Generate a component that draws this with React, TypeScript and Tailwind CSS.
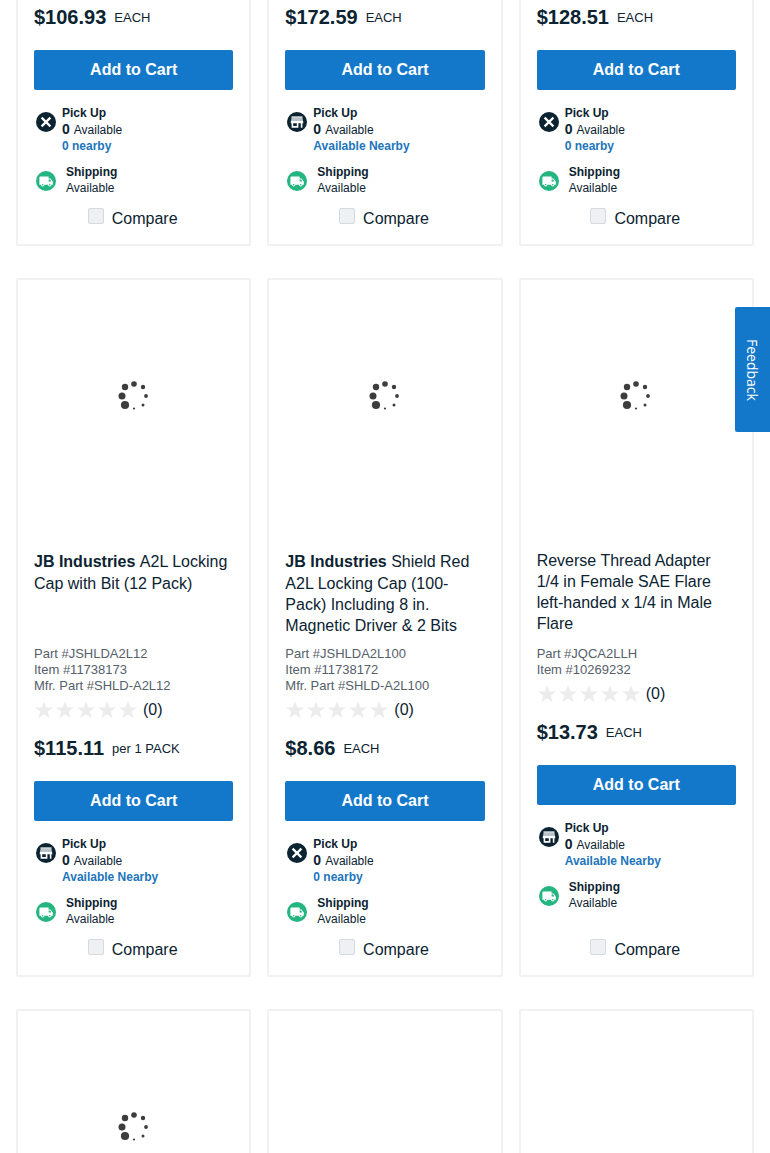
import type { ReactNode } from 'react'

type Product = {
  id: string
  brand?: string
  name?: string
  parts?: string[]
  price: string
  unit: string
  nearby: string
  inStoreNearby: boolean
}

const topProducts: Product[] = [
  { id: 'a1', price: '$106.93', unit: 'EACH', nearby: '0 nearby', inStoreNearby: false },
  { id: 'a2', price: '$172.59', unit: 'EACH', nearby: 'Available Nearby', inStoreNearby: true },
  { id: 'a3', price: '$128.51', unit: 'EACH', nearby: '0 nearby', inStoreNearby: false },
]

const products: Product[] = [
  {
    id: 'b1',
    brand: 'JB Industries',
    name: 'A2L Locking Cap with Bit (12 Pack)',
    parts: ['Part #JSHLDA2L12', 'Item #11738173', 'Mfr. Part #SHLD-A2L12'],
    price: '$115.11',
    unit: 'per 1 PACK',
    nearby: 'Available Nearby',
    inStoreNearby: true,
  },
  {
    id: 'b2',
    brand: 'JB Industries',
    name: 'Shield Red A2L Locking Cap (100-Pack) Including 8 in. Magnetic Driver & 2 Bits',
    parts: ['Part #JSHLDA2L100', 'Item #11738172', 'Mfr. Part #SHLD-A2L100'],
    price: '$8.66',
    unit: 'EACH',
    nearby: '0 nearby',
    inStoreNearby: false,
  },
  {
    id: 'b3',
    name: 'Reverse Thread Adapter 1/4 in Female SAE Flare left-handed x 1/4 in Male Flare',
    parts: ['Part #JQCA2LLH', 'Item #10269232'],
    price: '$13.73',
    unit: 'EACH',
    nearby: 'Available Nearby',
    inStoreNearby: true,
  },
]

function Spinner() {
  return (
    <svg className="size-8" viewBox="0 0 32 32" fill="#3d3d3d" role="img" aria-label="Loading">
      <circle cx="17" cy="4" r="2.8" />
      <circle cx="26" cy="7" r="2.2" />
      <circle cx="29" cy="16" r="1.9" />
      <circle cx="26" cy="25" r="1.5" />
      <circle cx="17" cy="28.5" r="1.1" />
      <circle cx="8" cy="25" r="4.1" />
      <circle cx="5" cy="16" r="3.5" />
      <circle cx="8" cy="7" r="3.2" />
    </svg>
  )
}

function UnavailableIcon() {
  return (
    <svg className="size-5 shrink-0" viewBox="0 0 20 20" aria-hidden="true">
      <circle cx="10" cy="10" r="10" fill="#0c2331" />
      <path d="M5.6 5.6l8.8 8.8M14.4 5.6l-8.8 8.8" stroke="#fff" strokeWidth="2.2" />
    </svg>
  )
}

function StoreIcon() {
  return (
    <svg className="size-5 shrink-0" viewBox="0 0 20 20" aria-hidden="true">
      <circle cx="10" cy="10" r="10" fill="#0c2331" />
      <path d="M4.5 4.4h11v1.4h-11z" fill="#fff" />
      <path d="M4.5 6h11l.6 2.9H3.9z" fill="#b9c3ca" />
      <path
        d="M3.9 8.9h12.2l.2 2.4h-.9v4.4h-1.6v-4.4h-2.4v4.4H4.6v-4.4h-.9zM6.2 11.3v2.8h3.6v-2.8z"
        fill="#fff"
        fillRule="evenodd"
      />
    </svg>
  )
}

function TruckIcon() {
  return (
    <svg className="size-5 shrink-0" viewBox="0 0 20 20" aria-hidden="true">
      <circle cx="10" cy="10" r="10" fill="#25b581" />
      <path
        d="M4.6 5.4h8v2.2h1.9l2.3 3v3.2h-1.3a1.7 1.7 0 0 1-3.4 0H8.4a1.7 1.7 0 0 1-3.4 0H3.4V6.6q0-1.2 1.2-1.2z"
        fill="#fff"
      />
      <path d="M12.6 8.6h1.5l1.3 1.8h-2.8z" fill="#25b581" />
      <circle cx="6.7" cy="13.8" r=".8" fill="#25b581" />
      <circle cx="13.8" cy="13.8" r=".8" fill="#25b581" />
    </svg>
  )
}

function Rating() {
  return (
    <div className="mt-1 flex h-6 items-center">
      <div className="flex gap-px" role="img" aria-label="0 out of 5 stars">
        {[1, 2, 3, 4, 5].map((n) => (
          <svg key={n} className="size-5" viewBox="0 0 20 20" fill="#ececec">
            <path d="M10 1l2.2 6.5h6.9l-5.5 4.1 2.1 6.6-5.7-4-5.7 4 2.1-6.6L.9 7.5h6.9z" />
          </svg>
        ))}
      </div>
      <span className="ml-[5px] text-base">(0)</span>
    </div>
  )
}

function PurchasePanel({ product }: { product: Product }) {
  return (
    <>
      <div className="flex h-7 items-center gap-2">
        <span className="text-xl font-bold">{product.price}</span>
        <span className="pt-0.5 text-[13px]">{product.unit}</span>
      </div>
      <button
        type="button"
        className="mt-[19px] h-10 w-full shrink-0 rounded-xs bg-[#1478ca] text-base font-bold text-white"
      >
        Add to Cart
      </button>
      <div className="mt-[15px] flex items-start gap-1.5 pl-0.5 text-xs">
        <div className="pt-[7px]">{product.inStoreNearby ? <StoreIcon /> : <UnavailableIcon />}</div>
        <div>
          <p className="leading-4 font-bold">Pick Up</p>
          <p className="flex items-baseline gap-1 leading-4">
            <b className="text-sm leading-4">0</b>
            <span>Available</span>
          </p>
          <a href="#" className="block leading-4 font-bold text-[#1c75bc]">
            {product.nearby}
          </a>
        </div>
      </div>
      <div className="mt-2.5 flex items-start gap-2.5 pl-0.5 text-xs">
        <div className="pt-[7px]">
          <TruckIcon />
        </div>
        <div>
          <p className="leading-4 font-bold">Shipping</p>
          <p className="leading-[17px]">Available</p>
        </div>
      </div>
      <label className="mt-auto flex items-start justify-center gap-2 pt-2.5 pr-0.5 text-base">
        <input
          type="checkbox"
          className="mt-px size-4 appearance-none rounded-xs border border-[#d3dae0] bg-[#eef0f3]"
        />
        Compare
      </label>
    </>
  )
}

function Media({ children }: { children?: ReactNode }) {
  return <div className="mt-4 flex h-[200px] items-center justify-center pr-0.5">{children}</div>
}

function ProductCard({ product }: { product: Product }) {
  return (
    <article className="flex flex-col rounded-xs border-2 border-[#f1f1f1] px-4 pb-[13px]">
      <Media>
        <Spinner />
      </Media>
      <h2 className="mt-[54px] min-h-24 text-base leading-[21px]">
        {product.brand && <b className="leading-[23px]">{product.brand} </b>}
        {product.name}
      </h2>
      <div className="text-[13px] leading-4 text-[#55606a]">
        {product.parts?.map((part) => (
          <p key={part}>{part}</p>
        ))}
      </div>
      <Rating />
      <div className="mt-3 flex grow flex-col">
        <PurchasePanel product={product} />
      </div>
    </article>
  )
}

export default function App() {
  return (
    <div className="min-h-screen bg-white font-['Liberation_Sans',Arial,sans-serif] text-[#0c2331]">
      <main className="space-y-8 px-4">
        <section className="grid grid-cols-3 gap-4">
          {topProducts.map((product) => (
            <article
              key={product.id}
              className="flex flex-col rounded-b-xs border-2 border-t-0 border-[#f1f1f1] px-4 pt-[3px] pb-[13px]"
            >
              <PurchasePanel product={product} />
            </article>
          ))}
        </section>

        <section className="grid grid-cols-3 gap-4">
          {products.map((product) => (
            <ProductCard key={product.id} product={product} />
          ))}
        </section>

        <section className="grid grid-cols-3 gap-4">
          {[true, false, false].map((loading, i) => (
            <article key={i} className="rounded-xs border-2 border-[#f1f1f1] px-4">
              <Media>{loading && <Spinner />}</Media>
            </article>
          ))}
        </section>
      </main>

      <button
        type="button"
        className="fixed top-[307px] right-0 flex h-[125px] w-[35px] items-center justify-center rounded-l-xs bg-[#1478ca] pr-0.5 font-['Open_Sans',sans-serif] text-sm text-white [writing-mode:vertical-rl]"
      >
        Feedback
      </button>
    </div>
  )
}
